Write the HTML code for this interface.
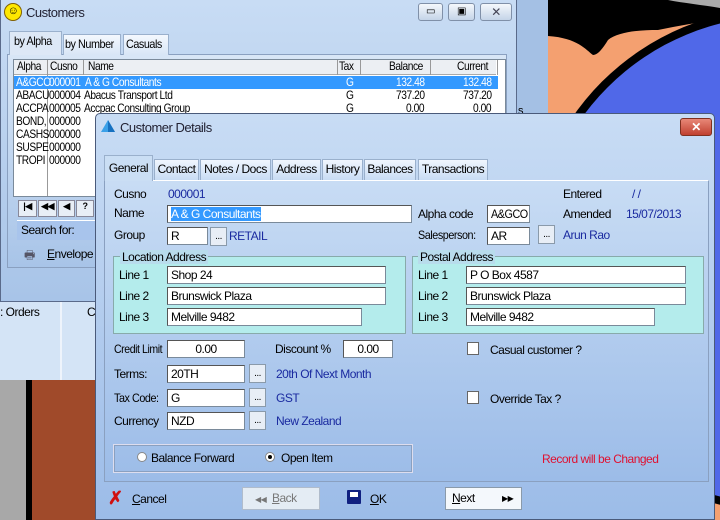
<!DOCTYPE html>
<html><head><meta charset="utf-8"><style>
*{box-sizing:border-box;margin:0;padding:0}
body{width:720px;height:520px;overflow:hidden;position:relative;background:#a4c0e4;font-family:"Liberation Sans Narrow","Liberation Sans",sans-serif;font-size:12px;letter-spacing:-0.5px;color:#000}
div,span{white-space:nowrap}
.a{position:absolute}
.inp{position:absolute;background:#fff;border:1px solid #7a8a9a;border-top-color:#555;border-left-color:#555;height:18px;padding:1px 3px;line-height:14px;white-space:nowrap}
.btn3{position:absolute;width:17px;height:19px;background:#e8eef6;border:1px solid #8a9aaa;text-align:center;line-height:18px;font-size:10px}
.blue{color:#1a2aa0}
.tab{position:absolute;top:159px;height:21px;background:linear-gradient(#f0f6fe,#c8dcf4);border:1px solid #9ab0cc;border-bottom:none;text-align:center;line-height:19px}
.ctab{position:absolute;height:21px;background:linear-gradient(#f4f8fe,#d8e6f6);border:1px solid #9ab0cc;border-bottom:none;text-align:center;line-height:19px;top:34px}
.row{position:absolute;left:0;width:482px;height:13px;line-height:13px}
.row span{position:absolute;transform:scaleX(.85);transform-origin:left}
.grp{position:absolute;background:#b4ecec;border:1px solid #8aa;}
.lbl{position:absolute}
.n{display:inline-block;transform:scaleX(.9);transform-origin:left}
</style></head><body>
<svg class="a" style="left:548px;top:0" width="172" height="520">
<rect width="172" height="520" fill="#f4a070"/>
<path d="M0 0H172V20C150 22 130 26 110 30 90 30 70 32 60 40 55 48 50 55 45 55 38 50 30 38 0 36Z" fill="#000"/>
<path d="M120 0H172V8C155 5 135 3 120 0Z" fill="#aaa"/>
<circle cx="232" cy="260" r="252" fill="#000"/>
<circle cx="232" cy="260" r="244" fill="#5068e8"/>
</svg>
<div class="a" style="left:0;top:300px;width:95px;height:80px;background:#d4e4f6"></div>
<div class="a" style="left:60px;top:300px;width:2px;height:80px;background:#eef4fc"></div>
<div class="a" style="left:0;top:305px;font-size:12px">: Orders</div>
<div class="a" style="left:87px;top:305px">C</div>
<div class="a" style="left:0;top:380px;width:26px;height:140px;background:#a8a8a8"></div>
<div class="a" style="left:26px;top:380px;width:6px;height:140px;background:#000"></div>
<div class="a" style="left:32px;top:380px;width:63px;height:140px;background:#a04a2a"></div>
<div class="a" style="left:95px;top:300px;width:3px;height:220px;background:#b8cce4"></div>
<div class="a" style="left:0;top:0;width:517px;height:302px;background:linear-gradient(#c8dcf4,#a8c4e8);border:1px solid #5a6a8a;border-top:none"></div>
<div class="a" style="left:4px;top:3px;width:18px;height:18px;border-radius:50%;background:#ffe800;border:1px solid #806000;text-align:center;font-size:11px;line-height:15px">☺</div>
<div class="a" style="left:26px;top:5px;font-size:13px;color:#223">Customers</div>
<div class="a" style="left:418px;top:3px;width:25px;height:18px;border:1px solid #8090a8;border-radius:3px;background:linear-gradient(#f4f8fc,#c4d4e8);text-align:center;font-size:10px;line-height:16px">▭</div>
<div class="a" style="left:448px;top:3px;width:27px;height:18px;border:1px solid #8090a8;border-radius:3px;background:linear-gradient(#f4f8fc,#c4d4e8);text-align:center;font-size:10px;line-height:16px">▣</div>
<div class="a" style="left:480px;top:3px;width:32px;height:18px;border:1px solid #8090a8;border-radius:3px;background:linear-gradient(#f4f8fc,#c4d4e8);text-align:center;font-size:12px;line-height:16px;color:#445">✕</div>
<div class="a" style="left:7px;top:54px;width:500px;height:214px;border:1px solid #8aa0c0;background:linear-gradient(#d8e6f6,#a8c4e8)"></div>
<div class="ctab" style="left:9px;top:31px;width:53px;height:24px;background:#dde8f6"><span class="n">by Alpha</span></div>
<div class="ctab" style="left:63px;width:58px"><span class="n">by Number</span></div>
<div class="ctab" style="left:123px;width:46px"><span class="n">Casuals</span></div>
<div class="a" style="left:13px;top:59px;width:493px;height:138px;background:#fff;border:1px solid #7a8a9a;overflow:hidden">
 <div class="row" style="top:0;background:#eceff3;height:15px;border-bottom:1px solid #aaa">
  <span style="left:3px">Alpha</span><span style="left:36px">Cusno</span><span style="left:74px">Name</span><span style="left:325px">Tax</span><span style="left:375px">Balance</span><span style="left:443px">Current</span>
 </div>
 <div class="a" style="left:33px;top:0;width:1px;height:140px;background:#999"></div>
 <div class="a" style="left:69px;top:0;width:1px;height:15px;background:#999"></div>
 <div class="a" style="left:323px;top:0;width:1px;height:15px;background:#999"></div>
 <div class="a" style="left:346px;top:0;width:1px;height:15px;background:#999"></div>
 <div class="a" style="left:416px;top:0;width:1px;height:15px;background:#999"></div>
 <div class="a" style="left:483px;top:0;width:1px;height:15px;background:#999"></div>
 <div class="row" style="top:16px;background:#3399ff;color:#fff;width:484px"><span style="left:2px">A&amp;GCO</span><span style="left:35px">000001</span><span style="left:71px">A &amp; G Consultants</span><span style="left:332px">G</span><span style="left:382px">132.48</span><span style="left:449px">132.48</span></div>
 <div class="row" style="top:29px"><span style="left:2px">ABACU</span><span style="left:35px">000004</span><span style="left:70px">Abacus Transport Ltd</span><span style="left:332px">G</span><span style="left:382px">737.20</span><span style="left:449px">737.20</span></div>
 <div class="row" style="top:42px"><span style="left:2px">ACCPA</span><span style="left:35px">000005</span><span style="left:70px">Accpac Consulting Group</span><span style="left:332px">G</span><span style="left:392px">0.00</span><span style="left:459px">0.00</span></div>
 <div class="row" style="top:55px"><span style="left:2px">BOND,</span><span style="left:35px">000000</span></div>
 <div class="row" style="top:68px"><span style="left:2px">CASHS</span><span style="left:35px">000000</span></div>
 <div class="row" style="top:81px"><span style="left:2px">SUSPE</span><span style="left:35px">000000</span></div>
 <div class="row" style="top:94px"><span style="left:2px">TROPI</span><span style="left:35px">000000</span></div>
</div>
<div class="a" style="left:18px;top:200px;width:77px;height:17px;display:flex;gap:1px;font-size:9px;font-weight:bold">
<div style="width:19px;background:#e8eef6;border:1px solid #889;text-align:center">|◀</div><div style="width:19px;background:#e8eef6;border:1px solid #889;text-align:center">◀◀</div><div style="width:17px;background:#e8eef6;border:1px solid #889;text-align:center">◀</div><div style="width:18px;background:#e8eef6;border:1px solid #889;text-align:center">?</div></div>
<div class="a" style="left:17px;top:220px;width:80px;height:20px;background:#a8c4ec;border-top:1px solid #fff;padding:2px 4px">Search for:</div>
<div class="a" style="left:24px;top:246px;font-size:12px;color:#556">🖶</div>
<div class="a" style="left:47px;top:247px"><u>E</u>nvelope</div>
<div class="a" style="left:518px;top:105px;font-size:11px">s</div>
<div class="a" style="left:95px;top:113px;width:620px;height:407px;background:linear-gradient(#c8dcf4 0%,#c0d6f2 20%,#9cbce8 100%);border:1px solid #4a5a7a;border-radius:5px 5px 0 0"></div>
<svg class="a" style="left:100px;top:119px" width="16" height="14"><path d="M8 1L15 13H1Z" fill="#3aa0e8"/><path d="M8 1L15 13H8Z" fill="#1670c0"/></svg>
<div class="a" style="left:120px;top:120px;font-size:13px;color:#223">Customer Details</div>
<div class="a" style="left:680px;top:118px;width:32px;height:18px;border-radius:3px;background:linear-gradient(#e88878,#c04030);border:1px solid #803020;color:#fff;text-align:center;font-weight:bold;font-size:12px;line-height:16px">✕</div>
<div class="a" style="left:104px;top:180px;width:605px;height:302px;border:1px solid #8aa0c0;border-top-color:#fff;background:linear-gradient(#c8dcf4,#9cbce8)"></div>
<div class="tab" style="left:104px;top:155px;height:26px;width:49px;background:#cadef4;line-height:24px">General</div>
<div class="tab" style="left:154px;width:45px">Contact</div>
<div class="tab" style="left:200px;width:71px">Notes / Docs</div>
<div class="tab" style="left:272px;width:49px">Address</div>
<div class="tab" style="left:322px;width:41px">History</div>
<div class="tab" style="left:364px;width:52px">Balances</div>
<div class="tab" style="left:418px;width:70px">Transactions</div>

<div class="lbl" style="left:114px;top:187px">Cusno</div>
<div class="lbl blue" style="left:168px;top:187px">000001</div>
<div class="lbl" style="left:563px;top:187px">Entered</div>
<div class="lbl blue" style="left:632px;top:187px">/ /</div>
<div class="lbl" style="left:114px;top:206px">Name</div>
<div class="inp" style="left:167px;top:205px;width:245px"><span style="background:#3399ff;color:#fff">A &amp; G Consultants</span></div>
<div class="lbl" style="left:418px;top:207px">Alpha code</div>
<div class="inp" style="left:487px;top:205px;width:43px"><span class="n">A&amp;GCO</span></div>
<div class="lbl" style="left:563px;top:207px">Amended</div>
<div class="lbl blue" style="left:626px;top:207px">15/07/2013</div>
<div class="lbl" style="left:114px;top:228px">Group</div>
<div class="inp" style="left:167px;top:227px;width:41px">R</div>
<div class="btn3" style="left:210px;top:227px">...</div>
<div class="lbl blue" style="left:229px;top:229px">RETAIL</div>
<div class="lbl" style="left:418px;top:228px"><span class="n">Salesperson:</span></div>
<div class="inp" style="left:487px;top:227px;width:43px">AR</div>
<div class="btn3" style="left:538px;top:225px">...</div>
<div class="lbl blue" style="left:563px;top:228px">Arun Rao</div>

<div class="grp" style="left:113px;top:256px;width:293px;height:78px"></div>
<div class="lbl" style="left:120px;top:250px;background:#b8dcec;padding:0 2px">Location Address</div>
<div class="lbl" style="left:119px;top:268px">Line 1</div><div class="inp" style="left:167px;top:266px;width:219px">Shop 24</div>
<div class="lbl" style="left:119px;top:289px">Line 2</div><div class="inp" style="left:167px;top:287px;width:219px">Brunswick Plaza</div>
<div class="lbl" style="left:119px;top:310px">Line 3</div><div class="inp" style="left:167px;top:308px;width:195px">Melville 9482</div>
<div class="grp" style="left:412px;top:256px;width:292px;height:78px"></div>
<div class="lbl" style="left:418px;top:250px;background:#b8dcec;padding:0 2px">Postal Address</div>
<div class="lbl" style="left:418px;top:268px">Line 1</div><div class="inp" style="left:466px;top:266px;width:220px">P O Box 4587</div>
<div class="lbl" style="left:418px;top:289px">Line 2</div><div class="inp" style="left:466px;top:287px;width:220px">Brunswick Plaza</div>
<div class="lbl" style="left:418px;top:310px">Line 3</div><div class="inp" style="left:466px;top:308px;width:189px">Melville 9482</div>

<div class="lbl" style="left:114px;top:342px"><span class="n" style="transform:scaleX(.88)">Credit Limit</span></div>
<div class="inp" style="left:167px;top:340px;width:78px;text-align:center">0.00</div>
<div class="lbl" style="left:275px;top:342px">Discount %</div>
<div class="inp" style="left:343px;top:340px;width:50px;text-align:center">0.00</div>
<div class="a" style="left:467px;top:342px;width:12px;height:13px;background:#fff;border:1px solid #666"></div>
<div class="lbl" style="left:490px;top:343px">Casual customer ?</div>
<div class="lbl" style="left:114px;top:367px">Terms:</div>
<div class="inp" style="left:167px;top:365px;width:78px">20TH</div>
<div class="btn3" style="left:249px;top:364px">...</div>
<div class="lbl blue" style="left:276px;top:367px">20th Of Next Month</div>
<div class="lbl" style="left:114px;top:391px"><span class="n" style="transform:scaleX(.9)">Tax Code:</span></div>
<div class="inp" style="left:167px;top:389px;width:78px">G</div>
<div class="btn3" style="left:249px;top:388px">...</div>
<div class="lbl blue" style="left:276px;top:391px">GST</div>
<div class="a" style="left:467px;top:391px;width:12px;height:13px;background:#fff;border:1px solid #666"></div>
<div class="lbl" style="left:490px;top:392px">Override Tax ?</div>
<div class="lbl" style="left:114px;top:414px">Currency</div>
<div class="inp" style="left:167px;top:412px;width:78px">NZD</div>
<div class="btn3" style="left:249px;top:411px">...</div>
<div class="lbl blue" style="left:276px;top:414px">New Zealand</div>

<div class="a" style="left:113px;top:444px;width:300px;height:29px;border:1px solid #dde;box-shadow:inset 0 0 0 1px #8aa0c0"></div>
<div class="a" style="left:137px;top:452px;width:10px;height:10px;border-radius:50%;background:#fff;border:1px solid #888"></div>
<div class="lbl" style="left:151px;top:451px">Balance Forward</div>
<div class="a" style="left:265px;top:452px;width:10px;height:10px;border-radius:50%;background:#fff;border:1px solid #888"><div style="margin:2px;width:4px;height:4px;border-radius:50%;background:#000"></div></div>
<div class="lbl" style="left:281px;top:451px">Open Item</div>
<div class="lbl" style="left:542px;top:452px;color:#e01030">Record will be Changed</div>

<div class="a" style="left:108px;top:489px;color:#d01010;font-size:18px;font-weight:bold;line-height:18px">✗</div>
<div class="lbl" style="left:132px;top:492px"><u>C</u>ancel</div>
<div class="a" style="left:242px;top:487px;width:78px;height:23px;background:#e4ecf4;border:1px solid #b0bccc;color:#777;font-size:12px;line-height:21px;padding-left:12px"><span style="font-size:8px">◀◀</span>&nbsp; <u>B</u>ack</div>
<div class="a" style="left:347px;top:490px;width:14px;height:14px;background:#102080;border-radius:1px"><div style="margin:2px 3px;width:8px;height:5px;background:#fff"></div></div>
<div class="lbl" style="left:370px;top:492px"><u>O</u>K</div>
<div class="a" style="left:445px;top:487px;width:77px;height:23px;background:#f4f8fc;border:1px solid #8a9aaa;font-size:12px;line-height:21px;padding-left:6px"><u>N</u>ext<span style="position:absolute;left:56px;font-size:8px">▶▶</span></div>
</body></html>
